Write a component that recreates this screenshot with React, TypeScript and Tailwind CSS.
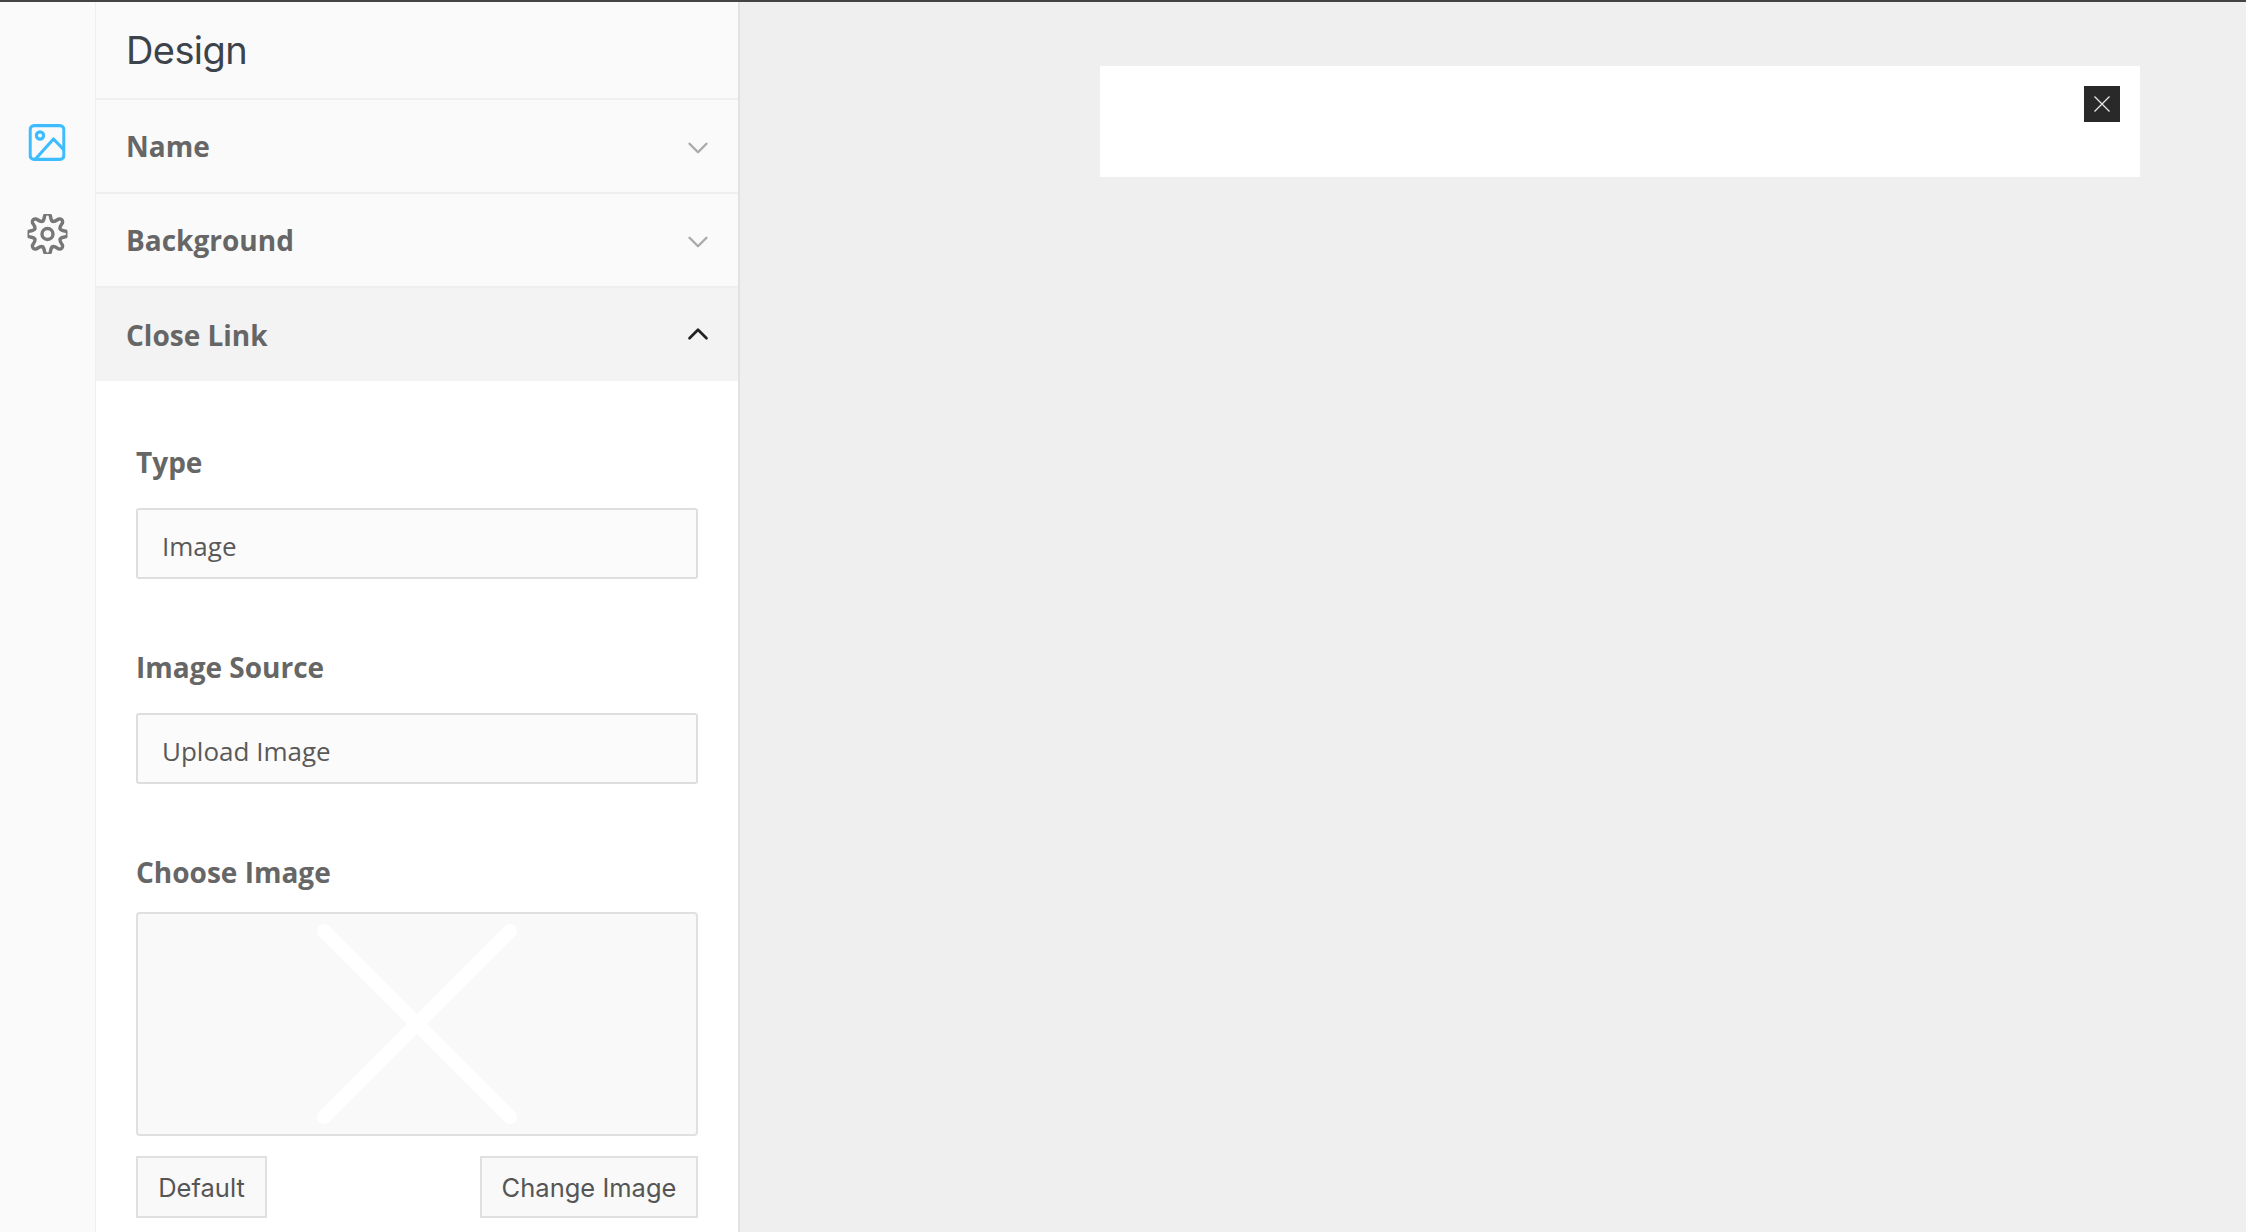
import React from 'react';
import { ChevronDown, ChevronUp } from 'lucide-react';

// 8 rounded teeth round a 40px box, first tooth pointing up
const gearPath = () => {
  const pt = (deg: number, r: number) => {
    const a = ((deg - 90) * Math.PI) / 180;
    return `${(20 + r * Math.cos(a)).toFixed(2)} ${(20 + r * Math.sin(a)).toFixed(2)}`;
  };
  let d = `M${pt(-22.5, 13.6)}`;
  for (let i = 0; i < 8; i++) {
    const c = i * 45;
    d += ` Q${pt(c - 15, 14)} ${pt(c - 10, 17.4)} A2.8 2.8 0 0 1 ${pt(c + 10, 17.4)} Q${pt(c + 15, 14)} ${pt(c + 22.5, 13.6)}`;
  }
  return d + ' Z';
};

const AccordionRow: React.FC<{ title: string }> = ({ title }) => (
  <div className="h-[92px] flex items-center justify-between pl-[30px] pr-[23px] bg-[#fafafa] border-b-2 border-[#efefef] box-content">
    <span className="font-['Open_Sans',sans-serif] font-bold text-[28px] text-[#666666]">{title}</span>
    <ChevronDown size={34} strokeWidth={1.7} className="text-[#aaaaaa] mt-[3px]" />
  </div>
);

const SelectField: React.FC<{ label: string; value: string }> = ({ label, value }) => (
  <div>
    <div className="font-['Open_Sans',sans-serif] font-bold text-[28px] leading-[38px] text-[#666666]">{label}</div>
    <div className="mt-[27px] h-[71px] flex items-center pl-[24px] pt-[5px] bg-[#fbfbfb] border-2 border-[#dedede] rounded-[3px] font-['Open_Sans',sans-serif] text-[26px] text-[#595959]">
      {value}
    </div>
  </div>
);

const App: React.FC = () => {
  return (
    <div className="h-screen w-full overflow-hidden flex flex-col bg-[#efefef]">
      <div className="h-[2px] bg-[#444444] shrink-0"></div>
      <div className="flex flex-1 min-h-0">

        {/* Icon rail */}
        <div className="w-[96px] shrink-0 bg-[#fafafa] border-r border-[#eeeeee] flex flex-col items-center pt-[122px]">
          <svg width="37" height="37" viewBox="0 0 37 37" fill="none" stroke="#3dbdff" strokeWidth="3.2" strokeLinejoin="round" className="-translate-x-[0.5px]">
            <rect x="1.6" y="1.6" width="33.8" height="33.8" rx="4" />
            <circle cx="11.5" cy="11.5" r="3.6" />
            <path d="M7 35 L25 15 L35.5 26" />
          </svg>
          <svg width="40" height="40" viewBox="0 0 40 40" fill="none" stroke="#777777" strokeWidth="3.4" strokeLinejoin="round" className="mt-[53px] -translate-x-[0.5px]">
            <path d={gearPath()} />
            <circle cx="20" cy="20" r="5.5" />
          </svg>
        </div>

        {/* Settings panel */}
        <div className="w-[644px] shrink-0 bg-white border-r-2 border-[#e2e2e2] flex flex-col">
          <div className="h-[96px] box-content flex items-center pl-[30px] bg-[#fafafa] border-b-2 border-[#efefef] font-['Inter',sans-serif] text-[38px] tracking-[-0.6px] text-[#3c434a]">
            Design
          </div>
          <AccordionRow title="Name" />
          <AccordionRow title="Background" />
          <div className="h-[93px] flex items-center justify-between pl-[30px] pr-[23px] bg-[#f3f3f3]">
            <span className="font-['Open_Sans',sans-serif] font-bold text-[28px] text-[#666666]">Close Link</span>
            <ChevronUp size={34} strokeWidth={1.9} className="text-[#222222] -mt-[2px]" />
          </div>

          <div className="pl-[40px] pr-[40px] pt-[62px] flex flex-col gap-[69px]">
            <SelectField label="Type" value="Image" />
            <SelectField label="Image Source" value="Upload Image" />
            <div>
              <div className="font-['Open_Sans',sans-serif] font-bold text-[28px] leading-[38px] text-[#666666]">Choose Image</div>
              <div className="mt-[21px] h-[224px] flex items-center justify-center bg-[#f9f9f9] border-2 border-[#e0e0e0] rounded-[4px]">
                <svg width="202" height="202" viewBox="0 0 202 202" fill="none" stroke="#ffffff" strokeWidth="14" strokeLinecap="round">
                  <path d="M8 8 L194 194 M194 8 L8 194" />
                </svg>
              </div>
              <div className="mt-[20px] flex justify-between font-['Inter',sans-serif] text-[25.5px] text-[#555555]">
                <div className="w-[131px] h-[62px] pt-[2px] flex items-center justify-center bg-[#f9f9f9] border-2 border-[#e0e0e0]">Default</div>
                <div className="w-[218px] h-[62px] pt-[2px] flex items-center justify-center bg-[#f9f9f9] border-2 border-[#e0e0e0]">Change Image</div>
              </div>
            </div>
          </div>
        </div>

        {/* Preview canvas */}
        <div className="flex-1 pl-[360px] pt-[64px]">
          <div className="w-[1040px] h-[111px] bg-white flex justify-end items-start pt-[20px] pr-[20px]">
            <div className="w-[36px] h-[36px] bg-[#292929] flex items-center justify-center">
              <svg width="16" height="16" viewBox="0 0 16 16" fill="none" stroke="#e8e8e8" strokeWidth="1.3">
                <path d="M0.5 0.5 L15.5 15.5 M15.5 0.5 L0.5 15.5" />
              </svg>
            </div>
          </div>
        </div>

      </div>
    </div>
  );
};

export default App;
